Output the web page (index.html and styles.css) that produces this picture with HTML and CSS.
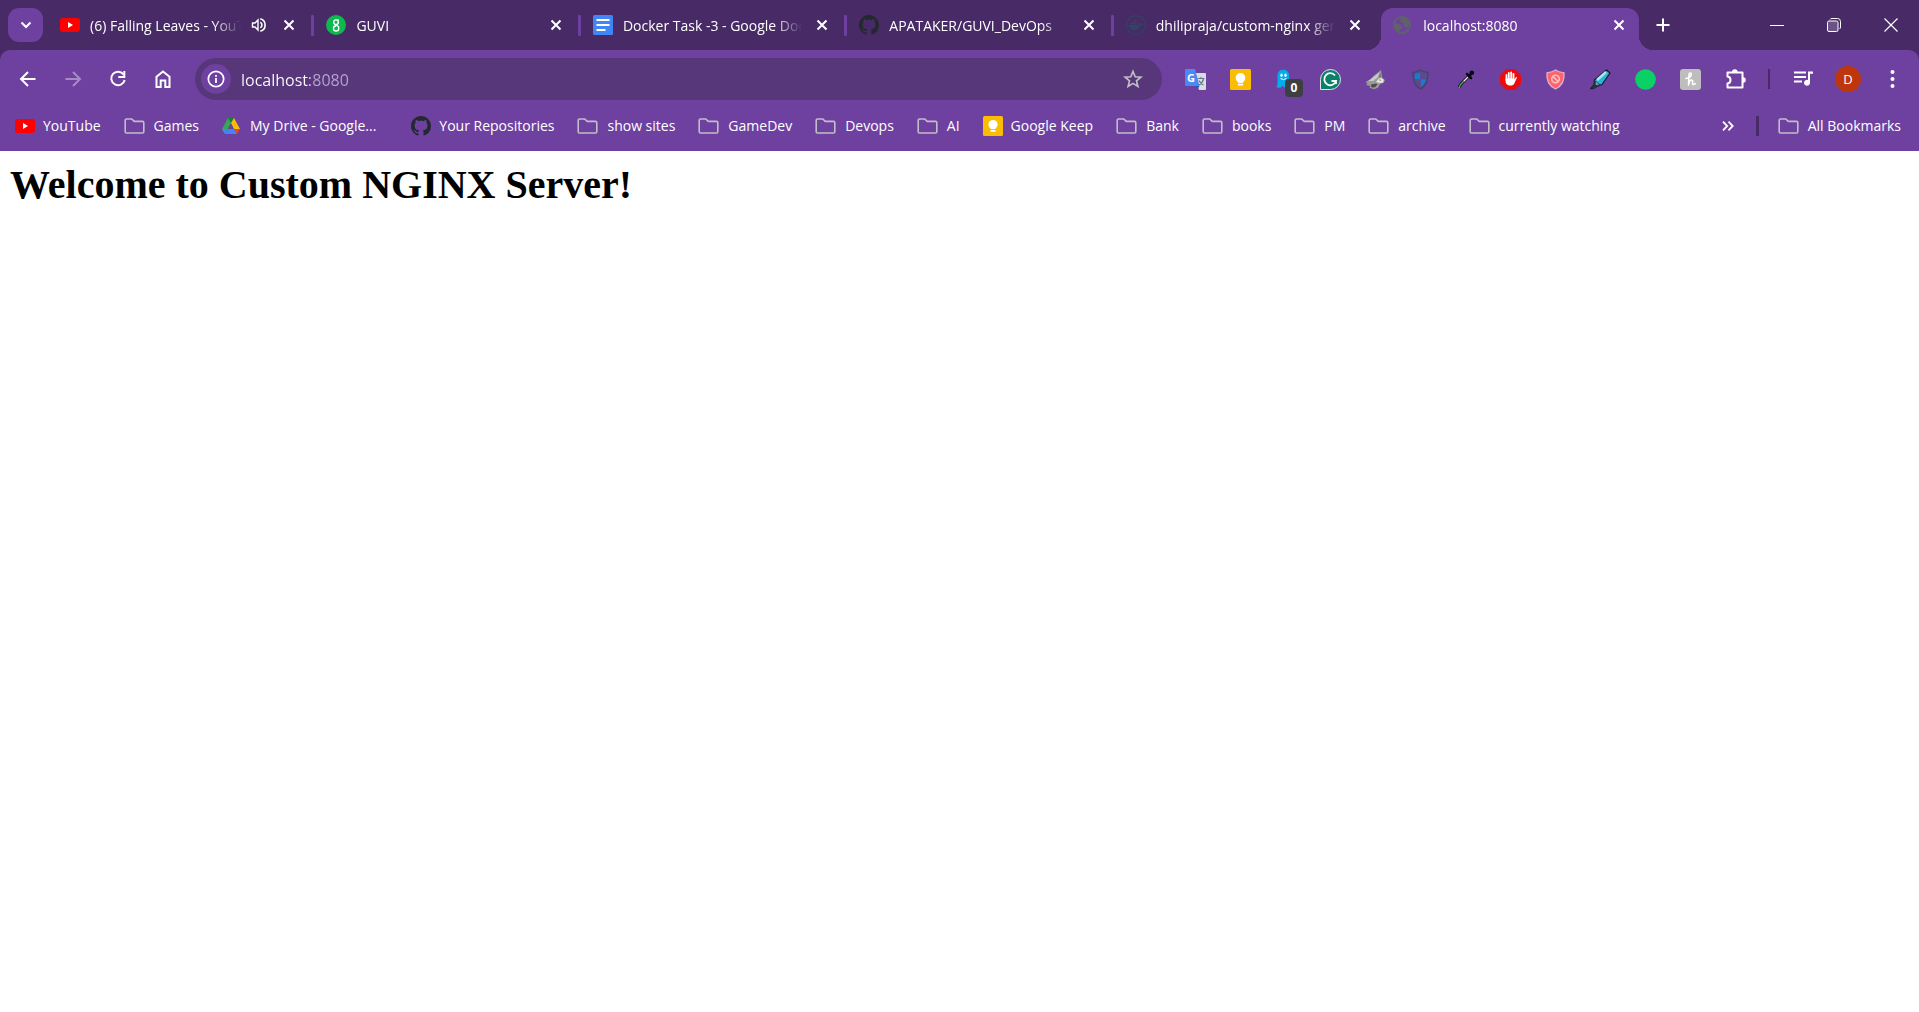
FILE: index.html
```html
<!DOCTYPE html>
<html lang="en">
<head>
<meta charset="utf-8">
<meta name="viewport" content="width=device-width, initial-scale=1">
<title>localhost:8080</title>
<link rel="stylesheet" href="styles.css">
</head>
<body>
<svg class="sprite" aria-hidden="true">
  <symbol id="youtube" viewBox="0 0 20 20"><rect y="3" width="20" height="14" rx="3" fill="#f00"/><path d="M8 7l5 3-5 3z" fill="#fff"/></symbol>
  <symbol id="close" viewBox="0 0 12 12"><path d="M1.500 1.500l9 9M10.500 1.500l-9 9" stroke="#fff" stroke-width="2" fill="none"/></symbol>
  <symbol id="github" viewBox="0 0 16 16"><path fill="#24292f" d="M8 0C3.580 0 0 3.580 0 8c0 3.540 2.290 6.530 5.470 7.590.4.070.550-.170.550-.380 0-.190-.010-.820-.010-1.490-2.010.370-2.530-.490-2.690-.940-.090-.230-.480-.940-.820-1.130-.280-.150-.680-.520-.010-.530.630-.010 1.080.580 1.230.820.720 1.210 1.870.870 2.330.660.070-.520.280-.870.510-1.070-1.780-.2-3.640-.890-3.640-3.950 0-.870.310-1.590.820-2.150-.080-.2-.360-1.020.080-2.120 0 0 .670-.210 2.200.820.640-.180 1.320-.270 2-.270.680 0 1.360.090 2 .270 1.530-1.040 2.200-.820 2.200-.820.440 1.100.160 1.920.080 2.120.510.560.820 1.270.820 2.150 0 3.070-1.870 3.750-3.650 3.950.290.250.540.730.540 1.480 0 1.070-.010 1.930-.010 2.200 0 .210.150.460.550.380A8.010 8.010 0 0 0 16 8c0-4.420-3.580-8-8-8z"/></symbol>
  <symbol id="folder" viewBox="0 0 21 20"><path d="M2.500 3h5.300l2.400 2.400h8.300a1.300 1.300 0 0 1 1.300 1.300v9a1.300 1.300 0 0 1-1.300 1.300h-16a1.300 1.300 0 0 1-1.300-1.300V4.300A1.300 1.300 0 0 1 2.500 3z" fill="none" stroke="#c3bdc7" stroke-width="1.600"/></symbol>
  <symbol id="keep" viewBox="0 0 20 20"><rect width="20" height="20" rx="1.500" fill="#fbbc04"/><circle cx="10" cy="8.500" r="4.600" fill="#fff"/><path d="M7.500 10h5v3h-5zM7.500 14h5v1.800h-5z" fill="#fff"/></symbol>
</svg>

<header class="browser">
  <div class="strip">
    <button class="tab-search" aria-label="Search tabs"><svg width="12" height="8" viewBox="0 0 12 8"><path d="M1.500 1.500L6 6l4.500-4.500" fill="none" stroke="#fff" stroke-width="2"/></svg></button>
    <nav class="tabs" aria-label="Tabs">
      <div class="tab">
        <svg class="icon"><use href="#youtube"/></svg>
        <a class="title" href="#">(6) Falling Leaves - YouTube</a>
        <button class="audio" aria-label="Mute tab"><svg width="16" height="16" viewBox="0 0 16 16"><path d="M1.500 6h2.500l3-3v10L4 10H1.500z" fill="none" stroke="#fff" stroke-width="1.400"/><path d="M9.300 5.300a3 3 0 0 1 0 5.400M9.300 1.800a6.400 6.400 0 0 1 0 12.400" fill="none" stroke="#fff" stroke-width="1.600"/></svg></button>
        <button class="close" aria-label="Close tab"><svg width="12" height="12"><use href="#close"/></svg></button>
      </div>
      <div class="tab">
        <svg class="icon" viewBox="0 0 20 20"><circle cx="10" cy="10" r="10" fill="#0fb84f"/><g fill="none" stroke="#fff" stroke-width="1.400"><path d="M12.700 4.700l-1.200.7M12.300 7.200a2.300 2.300 0 1 1-4.600 0 2.300 2.300 0 0 1 4.600 0zM8.500 9.300l3 1.600"/><path d="M11.300 10.700c1.200.6 1.700 1.500 1.400 2.700a2.600 2.600 0 0 1-5.200 0c-.1-1.400.8-2.300 2.500-2.600"/></g></svg>
        <a class="title" href="#">GUVI</a>
        <button class="close" aria-label="Close tab"><svg width="12" height="12"><use href="#close"/></svg></button>
      </div>
      <div class="tab">
        <svg class="icon" viewBox="0 0 20 20"><rect width="20" height="20" rx="1.500" fill="#4285f4"/><path d="M3.500 5h13M3.500 10h13M3.500 15h9" stroke="#fff" stroke-width="2.200"/></svg>
        <a class="title" href="#">Docker Task -3 - Google Docs</a>
        <button class="close" aria-label="Close tab"><svg width="12" height="12"><use href="#close"/></svg></button>
      </div>
      <div class="tab">
        <svg class="icon"><use href="#github"/></svg>
        <a class="title" href="#">APATAKER/GUVI_DevOps</a>
        <button class="close" aria-label="Close tab"><svg width="12" height="12"><use href="#close"/></svg></button>
      </div>
      <div class="tab">
        <svg class="icon" viewBox="0 0 20 20"><circle cx="10" cy="10" r="9.300" fill="none" stroke="#304563" stroke-width="1.200"/><path d="M3 10h10c.3-1.500 0-2 .8-2.700.9.500 1 1.300 1 1.700 1-.2 1.800 0 2.200.3-.4 1-1.300 1.400-2.400 1.400-1 3-3 4.500-6 4.500-3.500 0-5.700-1.500-5.600-5.200zM4.300 8h6.700v1.500H4.300zM6.500 6h3v1.500h-3zM9 4.300h1.700V7H9z" fill="#304563"/></svg>
        <a class="title" href="#">dhilipraja/custom-nginx general</a>
        <button class="close" aria-label="Close tab"><svg width="12" height="12"><use href="#close"/></svg></button>
      </div>
      <div class="tab active">
        <svg class="icon" viewBox="0 0 20 20"><circle cx="9" cy="10" r="8" fill="none" stroke="#5f6368" stroke-width="1.800"/><path d="M2 8l5 1.500 2.500 2.500-.5 2H7l.5 3.500C4 17 1 14 2 8zM8 2.500l4 .5 4 4-.5 5-3 .5-1.500-2 .5-2-3-1-1.500-2.500L9 4z" fill="#5f6368"/></svg>
        <a class="title" href="#" aria-current="page">localhost:8080</a>
        <button class="close" aria-label="Close tab"><svg width="12" height="12"><use href="#close"/></svg></button>
      </div>
    </nav>
    <button class="new-tab" aria-label="New tab"><svg width="14" height="14" viewBox="0 0 14 14"><path d="M7 .5v13M.5 7h13" stroke="#fff" stroke-width="2"/></svg></button>
    <div class="window-controls">
      <button aria-label="Minimize"><svg width="14" height="14" viewBox="0 0 14 14"><path d="M0 7.500h14" stroke="#fff"/></svg></button>
      <button aria-label="Restore"><svg width="14" height="14" viewBox="0 0 14 14" fill="none" stroke="#fff"><rect x=".5" y="3" width="10.500" height="10.500" rx="1.500" fill="#fff" fill-opacity=".2"/><path d="M3 1.500c.5-.8 1-1 2-1h5.500a3 3 0 0 1 3 3V9c0 1-.3 1.500-1 2"/></svg></button>
      <button aria-label="Close"><svg width="14" height="14" viewBox="0 0 14 14"><path d="M.5.500l13 13M13.500.500l-13 13" stroke="#fff" stroke-width="1.200"/></svg></button>
    </div>
  </div>

  <div class="chrome">
    <div class="toolbar">
      <div class="nav-buttons">
        <button aria-label="Back"><svg viewBox="0 0 20 20"><path d="M17.500 10H3.500M10 3l-7 7 7 7" fill="none" stroke="#fff" stroke-width="2"/></svg></button>
        <button aria-label="Forward" disabled><svg viewBox="0 0 20 20"><path d="M2.500 10h14M10 3l7 7-7 7" fill="none" stroke="#a68bc5" stroke-width="2"/></svg></button>
        <button aria-label="Reload"><svg viewBox="0 0 20 20"><path d="M15.700 5.600A6.800 6.800 0 1 0 16.700 11" fill="none" stroke="#fff" stroke-width="2"/><path d="M17.300 2v7h-7V7h5V2z" fill="#fff"/></svg></button>
        <button aria-label="Home"><svg viewBox="0 0 20 20"><path d="M3.500 18V7.700L10 2.500l6.500 5.200V18h-4.200v-6.500H7.700V18z" fill="none" stroke="#fff" stroke-width="2"/></svg></button>
      </div>
      <div class="omnibox">
        <button class="site-info" aria-label="View site information"><svg width="18" height="18" viewBox="0 0 18 18"><circle cx="9" cy="9" r="7.700" fill="none" stroke="#fff" stroke-width="1.700"/><path d="M8.100 8h1.800v5H8.100zM8.100 5h1.800v1.800H8.100z" fill="#fff"/></svg></button>
        <input class="address" type="text" value="localhost:8080" aria-label="Address and search bar">
        <button class="star" aria-label="Bookmark this tab"><svg width="20" height="20" viewBox="0 0 20 20"><path d="M10 2.500l2.200 5.300 5.700.4-4.400 3.700 1.400 5.600-4.900-3.100-4.900 3.100 1.400-5.600-4.400-3.700 5.700-.4z" fill="none" stroke="#c3bdc7" stroke-width="1.700"/></svg></button>
      </div>
      <div class="extensions">
        <button aria-label="Google Translate"><svg viewBox="0 0 21 21"><path d="M9 4h11a1 1 0 0 1 1 1v15a1 1 0 0 1-1 1h-6z" fill="#dadce0"/><path d="M12.500 9.500h7M16 8v1.500M18.500 10c-.7 3-2.500 5-4.500 6M14 11.500c1 2 2.500 3.500 4.500 4.500" stroke="#607d8b" stroke-width="1.200" fill="none"/><path d="M1 0h9l4.500 17H1a1 1 0 0 1-1-1V1a1 1 0 0 1 1-1z" fill="#4889f4"/><path d="M10.500 17H14.500L12 20.500z" fill="#3157a8"/><text x="2" y="13" class="glyph" font-size="11" fill="#fff">G</text></svg></button>
        <button aria-label="Google Keep"><svg viewBox="0 0 20 20"><use href="#keep"/></svg></button>
        <button class="ghost" aria-label="Ghostery"><svg viewBox="0 0 21 21"><path d="M8 .8c4 0 6 2.500 6 6v12l-2.500-2-2 2-2-2-2 2-4-.3c1.500-2.500 1-6.500 1-11 0-3.500 1.500-6.700 5.500-6.700z" fill="#00aef0"/><ellipse cx="6.500" cy="6.300" rx="1.200" ry="1.800" fill="#fff"/><ellipse cx="10.500" cy="6.300" rx="1.200" ry="1.800" fill="#fff"/><path d="M5.500 9.500q3 2.200 6 0" stroke="#fff" fill="none"/></svg><span class="badge">0</span></button>
        <button aria-label="Grammarly"><svg viewBox="0 0 21 21"><path d="M.5 20.500v-10a10 10 0 1 1 10 10z" fill="#0b806a" stroke="#e0e4e3"/><path d="M15 6.500a6 6 0 1 0 1 5.500h-4.500M16 11v4" stroke="#fff" stroke-width="1.800" fill="none"/></svg></button>
        <button aria-label="Wolf"><svg viewBox="0 0 21 21"><path d="M.5 13l5-2.500 3-3.500L16 1l1.200 7.500 2.800 2.800-1.200 2.500-3.600 1.200-2 3.500-4 1.800-4.700-1.600.8-1.700-4.300-1 1.500-1.500z" fill="#9b9b99"/><path d="M3 12l5.500-4L15 3l-2.500 5.500L8 12z" fill="#c9c9c7"/><path d="M11 13l3-3.500 2.500-.5 3 2.500-1.500 2-3 .5z" fill="#e6e6e4"/><path d="M13.500 8.500L15.500 3l.7 5z" fill="#777"/><path d="M14 10.500l2.300.4-1.300.9zM18.300 11.500l1.700.3-1 1.200zM6 15.500l5-1 1.500.8-2.500 3-3.500.2z" fill="#4c4c4c"/></svg></button>
        <button aria-label="Shield"><svg viewBox="0 0 21 21"><path d="M10.500 1c2 1.500 4.500 2.300 7.500 2.500 0 8-1.500 13-7.500 16.500C4.500 16.500 3 11.500 3 3.500 6 3.300 8.500 2.500 10.500 1z" fill="#5a4a90" stroke="#454568" stroke-width="1.500"/><path d="M10 3.500V10H4.800V5C7 4.800 8.500 4.300 10 3.500zM11 10.500h5c-.7 3.300-2.300 5.300-5 7z" fill="#187bd3"/></svg></button>
        <button aria-label="Color picker"><svg viewBox="0 0 21 21"><path d="M13.500 7.500L6 15l-2 3.500" stroke="#15151c" stroke-width="3" fill="none"/><path d="M13 8l-4.500 4.500" stroke="#eee" stroke-width="1.200"/><path d="M8.500 12.500L5.500 15.500l-1.500 3.500" stroke="#50b45b" stroke-width="1.300" fill="none"/><path d="M12 5l4 4M14.500 6.500L17 4" stroke="#08080d" stroke-width="2.500" stroke-linecap="round"/><circle cx="16.800" cy="3.700" r="2.300" fill="#08080d"/></svg></button>
        <button aria-label="AdBlock"><svg viewBox="0 0 21 21"><path d="M6.200 0h8.600L21 6.200v8.600L14.800 21H6.200L0 14.800V6.200z" fill="#eb0d0d"/><path d="M6.500 11V6M8.800 10V4M11.200 10V3.500M13.500 10V5" stroke="#fff" stroke-width="1.800" stroke-linecap="round"/><path d="M5.600 9.500h8.800l.2 1 1-2c.7-.8 1.500-.2 1.200.5l-2.300 5c-.7 2-2 2.500-4 2.500-3.500 0-4.900-2-4.900-4z" fill="#fff"/></svg></button>
        <button aria-label="Popup blocker"><svg viewBox="0 0 21 21"><path d="M10.500 1c3 2 5 2.300 8.500 2.800.8 8-1.500 13-8.500 16.200C3.500 16.800 1.200 11.800 2 3.800 5.500 3.300 7.500 3 10.500 1z" fill="#ff6369" stroke="#ddb2c7" stroke-width="1.300"/><circle cx="10.500" cy="10" r="3.800" fill="none" stroke="#ffc3c7" stroke-width="1.500"/><path d="M8 7.500l5 5" stroke="#ffc3c7" stroke-width="1.500"/></svg></button>
        <button aria-label="Highlighter"><svg viewBox="0 0 21 21"><path d="M16.500 1l3.500 3-8 11.500-4 1.500-5 2.500H.7L4 16l.5-5z" fill="#2bb4dc" stroke="#1b1b25" stroke-width="1.300" stroke-linejoin="round"/><path d="M16 3L7 11" stroke="#a5e8f8" stroke-width="2.400"/><path d="M4.500 11l6.500 5-3 1-3 2.500H.7L4 16z" fill="#243345"/><path d="M5.800 12.500l3.500 3-2.500.7-1.200-1z" fill="#829fb0"/></svg></button>
        <button aria-label="Green status"><svg viewBox="0 0 21 21"><circle cx="10.500" cy="10.500" r="10.300" fill="#0bd066"/></svg></button>
        <button aria-label="Honey"><svg viewBox="0 0 21 21"><rect width="21" height="21" rx="3" fill="#bdbdbd"/><path d="M6 9.500c3.500-.5 5.500-2.500 5.200-4.500-.3-1.500-2-1.200-2.200.5L8.500 16c.5-3 1.500-5 3-5s1.300 1.500 1 2.800c-.3 2 1 2.200 2.700.9" stroke="#fff" stroke-width="1.600" fill="none" stroke-linecap="round" stroke-linejoin="round"/></svg></button>
        <button aria-label="Extensions"><svg viewBox="0 0 21 21"><path d="M2.500 3.500h15v15h-15v-4q3-.3 3-3.500t-3-3.500z" fill="none" stroke="#fff" stroke-width="2" stroke-linejoin="round"/><path d="M7 3a2.800 2.800 0 0 1 5.600 0zM18 8.200a2.800 2.800 0 0 1 0 5.600z" fill="#fff"/></svg></button>
      </div>
      <div class="profile">
        <button aria-label="Media controls"><svg viewBox="0 0 21 21"><path d="M1 3.500h12M1 8h12M1 12.500h8" stroke="#fff" stroke-width="1.900"/><path d="M20 2.500v2.300h-3v9a3 3 0 1 1-2-2.800V2.500z" fill="#fff"/></svg></button>
        <button class="avatar" aria-label="Profile">D</button>
        <button aria-label="Menu"><svg viewBox="0 0 21 21" fill="#fff"><circle cx="10.500" cy="3" r="2"/><circle cx="10.500" cy="10" r="2"/><circle cx="10.500" cy="17" r="2"/></svg></button>
      </div>
    </div>

    <nav class="bookmarks" aria-label="Bookmarks">
      <a href="#"><svg class="icon"><use href="#youtube"/></svg>YouTube</a>
      <a href="#" class="dir"><svg class="icon"><use href="#folder"/></svg>Games</a>
      <a href="#" class="long"><svg class="icon" viewBox="1 0 20 20"><path d="M7 2h3v5L4 18l-3-5z" fill="#34a853"/><path d="M7 2h6l-3 5z" fill="#188038"/><path d="M13 2l6 11h-6l-3-6z" fill="#fbbc04"/><path d="M7 13h6l3 5H4z" fill="#4285f4"/><path d="M1 13h6l-3 5z" fill="#4285f4"/><path d="M13 13h6l-3 5z" fill="#ea4335"/><path d="M10 8l2.700 5H7.300z" fill="#6e41a0"/></svg>My Drive - Google...</a>
      <a href="#"><svg class="icon"><use href="#github"/></svg>Your Repositories</a>
      <a href="#" class="dir"><svg class="icon"><use href="#folder"/></svg>show sites</a>
      <a href="#" class="dir"><svg class="icon"><use href="#folder"/></svg>GameDev</a>
      <a href="#" class="dir"><svg class="icon"><use href="#folder"/></svg>Devops</a>
      <a href="#" class="dir"><svg class="icon"><use href="#folder"/></svg>AI</a>
      <a href="#"><svg class="icon"><use href="#keep"/></svg>Google Keep</a>
      <a href="#" class="dir"><svg class="icon"><use href="#folder"/></svg>Bank</a>
      <a href="#" class="dir"><svg class="icon"><use href="#folder"/></svg>books</a>
      <a href="#" class="dir"><svg class="icon"><use href="#folder"/></svg>PM</a>
      <a href="#" class="dir"><svg class="icon"><use href="#folder"/></svg>archive</a>
      <a href="#" class="dir"><svg class="icon"><use href="#folder"/></svg>currently watching</a>
      <div class="overflow">
        <button class="more" aria-label="More bookmarks"><svg width="12" height="10" viewBox="0 0 12 10"><path d="M1 .7L5.200 5 1 9.300M6.500.7L10.700 5 6.500 9.300" fill="none" stroke="#fff" stroke-width="1.800"/></svg></button>
        <a href="#" class="dir"><svg class="icon"><use href="#folder"/></svg>All Bookmarks</a>
      </div>
    </nav>
  </div>
</header>

<main class="page">
  <h1>Welcome to Custom NGINX Server!</h1>
</main>
</body>
</html>
```

FILE: styles.css
```css
:root {
  --strip: #472a66;
  --bar: #6e41a0;
  --field: #573779;
}

* {
  box-sizing: border-box;
}

body {
  margin: 0;
  background: #fff;
}

.sprite {
  display: none;
}

.browser {
  font: 14px/20px "Open Sans", "Noto Sans", sans-serif;
  color: #fff;
  background: var(--strip);
}

.browser button {
  display: flex;
  align-items: center;
  justify-content: center;
  padding: 0;
  border: 0;
  background: none;
  color: inherit;
  font: inherit;
}

.browser a {
  color: inherit;
  text-decoration: none;
  white-space: nowrap;
}

.icon {
  flex: none;
  width: 20px;
  height: 20px;
}

.glyph {
  font-family: "Open Sans", sans-serif;
  font-weight: 700;
}

/* Tab strip */
.strip {
  display: flex;
  height: 50px;
  padding-left: 8px;
}

.browser .tab-search {
  flex: none;
  width: 35px;
  height: 34px;
  margin: 8px 5px 0 0;
  border-radius: 11px;
  background: var(--bar);
}

.tabs {
  display: flex;
  flex: 1;
  min-width: 0;
  max-width: 1598px;
}

.tab {
  position: relative;
  display: flex;
  flex: 266 1 0;
  align-items: center;
  min-width: 0;
  padding: 0 15px 0 12px;
}

.tab:not(.active)::after {
  content: "";
  position: absolute;
  right: 0;
  top: 15px;
  width: 3px;
  height: 21px;
  border-radius: 1px;
  background: var(--bar);
}

.tab:nth-last-child(2)::after {
  display: none;
}

.title {
  flex: 1;
  min-width: 0;
  margin: 0 10px;
  padding-top: 2px;
  overflow: hidden;
  mask-image: linear-gradient(to left, transparent, #000 28px);
}

.browser .audio {
  margin-right: 12px;
}

.browser .close {
  width: 20px;
  height: 20px;
}

.active {
  flex-grow: 262;
  margin: 8px 7px 0 1px;
  padding: 0 10px 8px 12px;
  border-radius: 12px 12px 0 0;
  background: var(--bar);
}

.active::before,
.active::after {
  content: "";
  position: absolute;
  bottom: 0;
  width: 14px;
  height: 14px;
}

.active::before {
  right: 100%;
  background: radial-gradient(circle at 0 0, transparent 14px, var(--bar) 14px);
}

.active::after {
  left: 100%;
  background: radial-gradient(circle at 100% 0, transparent 14px, var(--bar) 14px);
}

.browser .new-tab {
  width: 34px;
}

.window-controls {
  display: flex;
  margin-left: auto;
}

.window-controls button {
  width: 57px;
}

/* Toolbar */
.chrome {
  border-radius: 10px 10px 0 0;
  background: var(--bar);
}

.toolbar {
  display: flex;
  align-items: center;
  padding: 8px 4px 0 5px;
}

.nav-buttons,
.extensions,
.profile {
  display: flex;
  align-items: center;
}

.toolbar button {
  position: relative;
  width: 45px;
  height: 34px;
}

.extensions svg,
.profile svg {
  width: 21px;
  height: 21px;
}

.nav-buttons svg {
  width: 20px;
  height: 20px;
}

.omnibox {
  display: flex;
  flex: 1;
  align-items: center;
  height: 42px;
  margin: 0 11px 0 10px;
  padding: 0 19px 0 6px;
  border-radius: 21px;
  background: var(--field);
}

.toolbar .site-info {
  flex: none;
  width: 30px;
  height: 30px;
  border-radius: 50%;
  background: var(--bar);
}

/* The host is bright and the port dimmed. */
.address {
  flex: 1;
  min-width: 0;
  margin-left: 10px;
  padding: 1px 0 0;
  border: 0;
  outline: 0;
  background: linear-gradient(to right, #fff 69px, #b9a6cf 69px) text;
  color: transparent;
  font: 16px/24px "Open Sans", "Noto Sans", sans-serif;
}

.toolbar .star {
  width: 20px;
}

.badge {
  position: absolute;
  top: 17px;
  left: 22px;
  width: 18px;
  height: 18px;
  border-radius: 4px;
  background: #3c4043;
  font: 700 12px/18px "Open Sans", sans-serif;
}

.profile {
  margin-left: 10px;
}

.profile::before {
  content: "";
  width: 2px;
  height: 20px;
  margin-right: 11px;
  background: var(--strip);
}

.browser .avatar {
  width: 26px;
  height: 26px;
  margin: 0 9px;
  border-radius: 50%;
  background: #bf360c;
  font-size: 13px;
}

/* Bookmarks bar */
.bookmarks {
  display: flex;
  align-items: center;
  gap: 23px;
  height: 51px;
  padding: 0 18px 0 15px;
}

.bookmarks a {
  display: flex;
  align-items: center;
  gap: 8px;
}

.bookmarks .dir {
  gap: 9px;
}

.dir .icon {
  width: 21px;
}

.long {
  padding-right: 12px;
}

.overflow {
  display: flex;
  align-items: center;
  gap: 22px;
  margin-left: auto;
}

.overflow .dir::before {
  content: "";
  width: 3px;
  height: 20px;
  margin-right: 10px;
  background: var(--strip);
}

/* Served page */
.page {
  padding: 11px 10px;
}

.page h1 {
  margin: 0;
  color: #000;
  font: 700 40px/46px "Liberation Serif", "Times New Roman", serif;
}
```
